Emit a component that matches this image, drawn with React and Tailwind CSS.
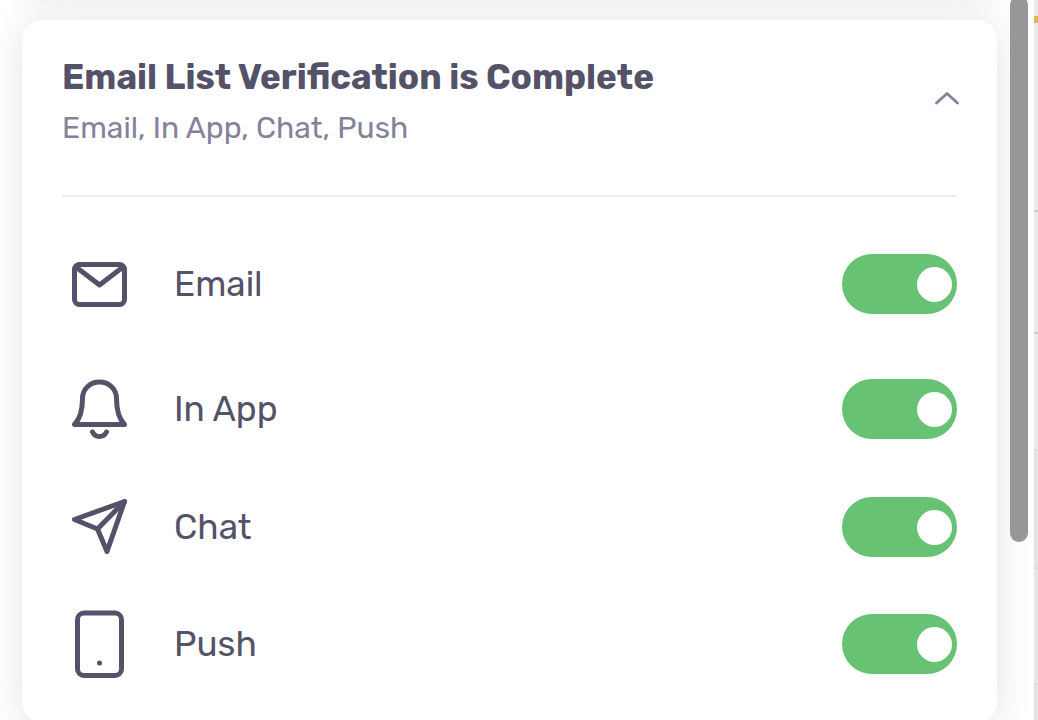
import { useState } from "react";

const stroke = {
  fill: "none",
  stroke: "currentColor",
  strokeWidth: 5,
  strokeLinecap: "round",
  strokeLinejoin: "round",
  "aria-hidden": true,
};

function MailIcon() {
  return (
    <svg width="55" height="45" viewBox="0 0 55 45" {...stroke}>
      <rect x="2.5" y="2.5" width="50" height="40" rx="5" />
      <path d="M4 5 27.5 23 51 5" />
    </svg>
  );
}

function BellIcon() {
  return (
    <svg width="55" height="60" viewBox="0 0 55 60" {...stroke}>
      <path d="M2.5 45.5h50C47.500 40.500 44.500 31 44.500 19.500C44.500 10 37 3 27.500 3S10.500 10 10.500 19.500C10.500 31 7.500 40.500 2.500 45.500Z" />
      <path d="M20.500 53C23.500 59 31.500 59 34.500 53" />
    </svg>
  );
}

function SendIcon() {
  return (
    <svg width="55" height="56" viewBox="0 0 55 56" {...stroke}>
      <path d="M52.500 2.500 2.500 20.500 25.500 30 35 52.500Z" />
      <path d="M52.500 2.500 25.500 30" />
    </svg>
  );
}

function PhoneIcon() {
  return (
    <svg width="49" height="68" viewBox="0 0 49 68" {...stroke}>
      <rect x="2.500" y="3" width="44" height="62.500" rx="6.500" />
      <circle cx="24.500" cy="53" r="2.500" fill="currentColor" stroke="none" />
    </svg>
  );
}

const channels = [
  { id: "email", label: "Email", Icon: MailIcon, height: "h-[132px]" },
  { id: "in-app", label: "In App", Icon: BellIcon, height: "h-[118px]" },
  { id: "chat", label: "Chat", Icon: SendIcon, height: "h-[118px]" },
  { id: "push", label: "Push", Icon: PhoneIcon, height: "h-[116px]" },
];

function ChannelRow({ id, label, Icon, height }) {
  return (
    <li className={`flex items-center ${height}`}>
      <span className="flex w-[75px] shrink-0 justify-center">
        <Icon />
      </span>
      <label htmlFor={id} className="flex-1 pl-[37px] text-[35px] leading-10">
        {label}
      </label>
      <input
        id={id}
        type="checkbox"
        role="switch"
        defaultChecked
        className="flex h-[60px] w-[115px] shrink-0 cursor-pointer appearance-none items-center rounded-full bg-[#c9cbd3] px-[5px] before:size-[35px] before:rounded-full before:bg-white checked:justify-end checked:bg-[#68c274]"
      />
    </li>
  );
}

function NotificationCard() {
  const [open, setOpen] = useState(true);
  return (
    <section className="relative rounded-[20px] bg-white px-10 pb-5 shadow-[0_4px_36px_rgba(50,65,90,0.15)]">
      <header className="flex h-[177px] items-start border-b-2 border-[#eeeeef] pt-9">
        <div className="flex-1">
          <h2 className="text-[35px] leading-[42px] font-bold">
            Email List Verification is Complete
          </h2>
          <p className="mt-3 text-[30px] leading-9 text-[#83829a]">Email, In App, Chat, Push</p>
        </div>
        <button
          type="button"
          aria-label="Toggle details"
          aria-expanded={open}
          onClick={() => setOpen(!open)}
          className="-mr-1 mt-[22px] flex size-10 cursor-pointer items-center justify-end text-[#83829a]"
        >
          <svg width="28" height="16" viewBox="0 0 28 16" {...stroke} strokeWidth="2.800">
            <path d="M3.500 13 14 3.500 24.500 13" />
          </svg>
        </button>
      </header>
      {open && (
        <ul className="pt-[21px]">
          {channels.map((c) => (
            <ChannelRow key={c.id} {...c} />
          ))}
        </ul>
      )}
    </section>
  );
}

export default function App() {
  return (
    <div className="flex h-screen overflow-hidden bg-white font-['Rubik','Roboto',sans-serif] text-[#545268]">
      <main className="relative min-w-0 flex-1 overflow-hidden pr-[37px] pl-[22px]">
        <div className="-mt-[102px] mb-[22px] h-[100px] rounded-[20px] bg-white shadow-[0_0_32px_rgba(50,65,90,0.12)]" />
        <NotificationCard />
        <div className="absolute -top-1 right-1.5 h-[546px] w-[18px] rounded-full bg-[#979797]" />
      </main>
      <aside className="flex w-1 shrink-0 flex-col bg-[#e9e9ee]">
        <div className="mt-4 h-[7px] bg-[#e3b94b]" />
        <div className="h-[189px] border-b-2 border-[#c9c9ce]" />
        <div className="h-[122px] border-b-2 border-[#c9c9ce]" />
        <div className="h-[117px] border-b-2 border-[#dadade]" />
        <div className="h-[118px] border-b-2 border-[#dadade] bg-[#e3e3e6]" />
        <div className="h-[116px] border-b-2 border-[#dadade] bg-[#e6e6ea]" />
        <div className="flex-1 bg-[#e3e3e6]" />
      </aside>
    </div>
  );
}
